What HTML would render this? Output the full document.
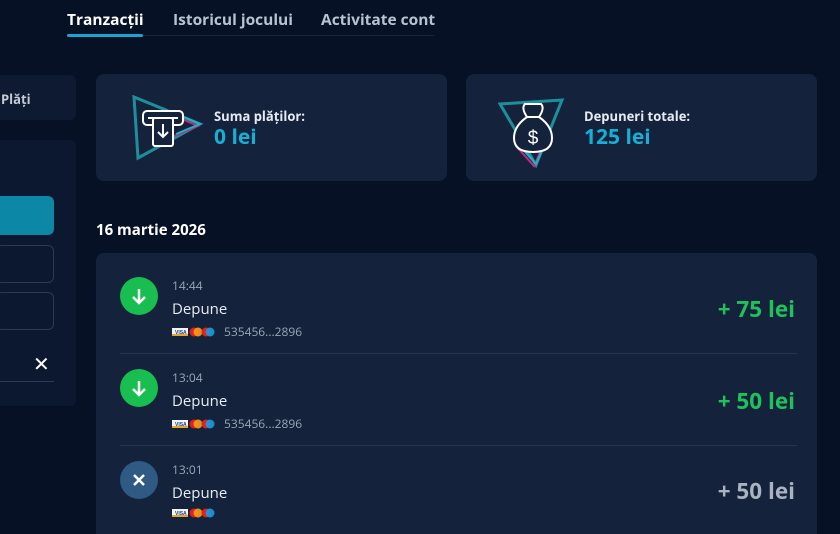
<!DOCTYPE html>
<html><head><meta charset="utf-8"><style>
*{margin:0;padding:0;box-sizing:border-box}
html,body{width:840px;height:534px;overflow:hidden}
body{background:#061126;font-family:"Open Sans","Liberation Sans",sans-serif;color:#e8edf5;position:relative}
.abs{position:absolute}
.tab{position:absolute;top:8px;font-size:15.5px;font-weight:bold;color:#b9c2d0}
.card{position:absolute;background:#15223c;border-radius:8px}
.lbl{font-size:13px;font-weight:bold;color:#e6ebf3}
.val{font-size:21px;font-weight:bold;color:#16b0d6;line-height:24px}
.circ{position:absolute;left:24px;width:38px;height:38px;border-radius:50%;background:#18be4f}
.time{position:absolute;left:76px;font-size:12px;color:#9aa5b6}
.name{position:absolute;left:76px;font-size:15px;color:#e8edf5}
.cards{position:absolute;left:76px;display:flex;gap:2px;align-items:center}
.num{font-size:12px;color:#9aa5b6;margin-left:6px}
.amt{position:absolute;right:22px;font-size:22.5px;font-weight:bold;color:#1fc25a}
.sep{position:absolute;left:24px;right:20px;height:1px;background:#263652}
</style></head><body>
<div class="tab" style="left:67px;color:#fff">Tranzacții</div>
<div class="tab" style="left:173px">Istoricul jocului</div>
<div class="tab" style="left:321px">Activitate cont</div>
<div class="abs" style="left:67px;top:35px;width:367px;height:1px;background:#17243d"></div>
<div class="abs" style="left:67px;top:34px;width:76px;height:3px;background:#16a6cf;border-radius:2px"></div>

<div class="abs" style="left:0;top:75px;width:76px;height:45px;background:#0e1a31;border-radius:0 6px 6px 0"></div>
<div class="abs lbl" style="left:1px;top:90px;color:#c4ccd8">Plăți</div>
<div class="abs" style="left:0;top:140px;width:76px;height:266px;background:#0c1830;border-radius:0 6px 6px 0"></div>
<div class="abs" style="left:0;top:196px;width:54px;height:39px;background:#0d87a6;border-radius:0 6px 6px 0"></div>
<div class="abs" style="left:-4px;top:245px;width:58px;height:38px;border:1px solid #2a3a55;border-radius:6px"></div>
<div class="abs" style="left:-4px;top:292px;width:58px;height:38px;border:1px solid #2a3a55;border-radius:6px"></div>
<div class="abs" style="left:33px;top:350px;font-size:20px;color:#fff">✕</div>
<div class="abs" style="left:0;top:381px;width:54px;height:1px;background:#2a3a55"></div>

<div class="card" style="left:96px;top:74px;width:351px;height:107px">
<svg class="abs" style="left:30px;top:14px" width="80" height="78" viewBox="0 0 80 78">
<path d="M8 9 L74 36 L12 70 Z" fill="none" stroke="#1d8f9a" stroke-width="3"/>
<path d="M44 26 L72 38 L48 48" fill="none" stroke="#c22a7a" stroke-width="2"/>
<path d="M46 24 L74 36 L50 46" fill="none" stroke="#22b0c8" stroke-width="2"/>
<rect x="17" y="23" width="40" height="14" rx="4" fill="#15223c" stroke="#fff" stroke-width="2"/>
<path d="M22 30 H52" stroke="#fff" stroke-width="2"/>
<rect x="27" y="30" width="20" height="28" rx="2" fill="#15223c" stroke="#fff" stroke-width="2"/>
<path d="M37 36 V49 M32 44 L37 49 L42 44" fill="none" stroke="#fff" stroke-width="2"/>
</svg>
<div class="abs lbl" style="left:118px;top:33px">Suma plăților:</div>
<div class="abs val" style="left:118px;top:51px">0 lei</div>
</div>

<div class="card" style="left:466px;top:74px;width:351px;height:107px">
<svg class="abs" style="left:32px;top:22px" width="70" height="72" viewBox="0 0 70 72">
<path d="M2 8 L64 4 L38 69 Z" fill="none" stroke="#1d8f9a" stroke-width="3"/>
<path d="M18 50 L36 70 L44 52" fill="none" stroke="#c22a7a" stroke-width="2"/>
<path d="M20 48 L38 68 L46 50" fill="none" stroke="#22b0c8" stroke-width="2"/>
<path d="M29 21 Q23 12 27 8 L43 8 Q47 12 41 21 Z" fill="#15223c" stroke="#fff" stroke-width="2"/>
<path d="M29 21 Q16 30 16 42 Q16 56 35 56 Q54 56 54 42 Q54 30 41 21 Z" fill="#15223c" stroke="#fff" stroke-width="2"/>
<path d="M28 21 H42" stroke="#fff" stroke-width="2"/>
<text x="35" y="48" text-anchor="middle" font-size="19" fill="#fff" font-family="Liberation Sans">$</text>
</svg>
<div class="abs lbl" style="left:118px;top:33px">Depuneri totale:</div>
<div class="abs val" style="left:118px;top:51px">125 lei</div>
</div>

<div class="abs" style="left:96px;top:220px;font-size:15px;font-weight:bold;color:#fff">16 martie 2026</div>

<div class="card" style="left:96px;top:253px;width:721px;height:290px">
 <div class="circ" style="top:24px"><svg width="38" height="38"><path d="M19 12 V26 M13 20 L19 26 L25 20" stroke="#fff" stroke-width="2.5" fill="none"/></svg></div>
 <div class="time" style="top:24px">14:44</div>
 <div class="name" style="top:46px">Depune</div>
 <div class="cards" style="top:70px"><svg width="44" height="12"><rect x="0" y="2" width="16" height="8" fill="#f3f3f3"/><rect x="0" y="8" width="16" height="2" fill="#e7a626"/><text x="3" y="8" font-size="5" fill="#1a3d8f" font-family="Liberation Sans" font-weight="bold">VISA</text><circle cx="22" cy="6" r="4.5" fill="#e2201c"/><circle cx="26" cy="6" r="4.5" fill="#f79e1b" opacity=".9"/><circle cx="34" cy="6" r="4.5" fill="#e2201c"/><circle cx="38" cy="6" r="4.5" fill="#1a9be0" opacity=".9"/></svg><span class="num">535456...2896</span></div>
 <div class="amt" style="top:40px">+ 75 lei</div>
 <div class="sep" style="top:100px"></div>

 <div class="circ" style="top:116px"><svg width="38" height="38"><path d="M19 12 V26 M13 20 L19 26 L25 20" stroke="#fff" stroke-width="2.5" fill="none"/></svg></div>
 <div class="time" style="top:116px">13:04</div>
 <div class="name" style="top:138px">Depune</div>
 <div class="cards" style="top:162px"><svg width="44" height="12"><rect x="0" y="2" width="16" height="8" fill="#f3f3f3"/><rect x="0" y="8" width="16" height="2" fill="#e7a626"/><text x="3" y="8" font-size="5" fill="#1a3d8f" font-family="Liberation Sans" font-weight="bold">VISA</text><circle cx="22" cy="6" r="4.5" fill="#e2201c"/><circle cx="26" cy="6" r="4.5" fill="#f79e1b" opacity=".9"/><circle cx="34" cy="6" r="4.5" fill="#e2201c"/><circle cx="38" cy="6" r="4.5" fill="#1a9be0" opacity=".9"/></svg><span class="num">535456...2896</span></div>
 <div class="amt" style="top:132px">+ 50 lei</div>
 <div class="sep" style="top:192px"></div>

 <div class="circ" style="top:208px;background:#2f5a84"><svg width="38" height="38"><path d="M14 14 L24 24 M24 14 L14 24" stroke="#fff" stroke-width="2.5"/></svg></div>
 <div class="time" style="top:208px">13:01</div>
 <div class="name" style="top:230px">Depune</div>
 <div class="cards" style="top:254px"><svg width="44" height="12"><rect x="0" y="2" width="16" height="8" fill="#f3f3f3"/><rect x="0" y="8" width="16" height="2" fill="#e7a626"/><text x="3" y="8" font-size="5" fill="#1a3d8f" font-family="Liberation Sans" font-weight="bold">VISA</text><circle cx="22" cy="6" r="4.5" fill="#e2201c"/><circle cx="26" cy="6" r="4.5" fill="#f79e1b" opacity=".9"/><circle cx="34" cy="6" r="4.5" fill="#e2201c"/><circle cx="38" cy="6" r="4.5" fill="#1a9be0" opacity=".9"/></svg></div>
 <div class="amt" style="top:222px;color:#a9b2c1">+ 50 lei</div>
</div>
</body></html>
